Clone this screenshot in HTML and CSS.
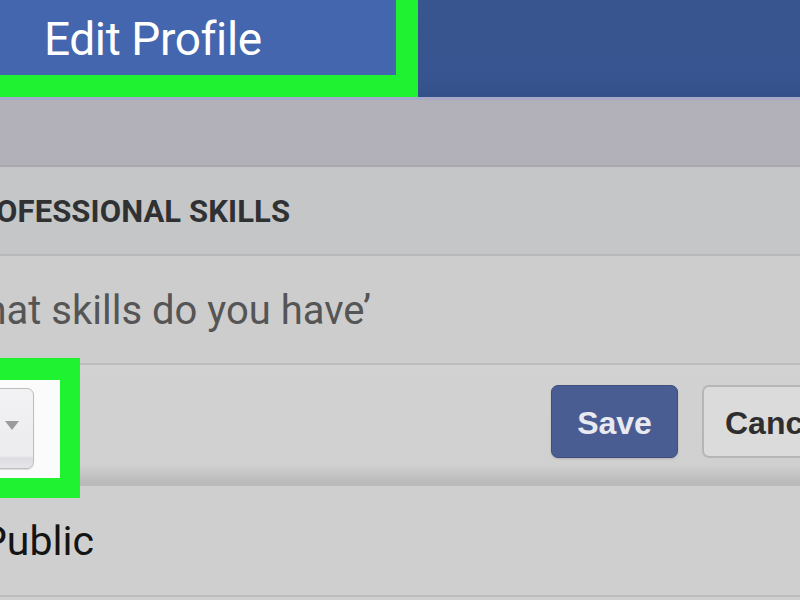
FILE: index.html
```html
<!DOCTYPE html>
<html>
<head>
<meta charset="utf-8">
<link rel="stylesheet" href="styles.css">
</head>
<body>
<div class="screen">
  <header class="topbar">
    <div class="tab"><span class="tab-title">Edit Profile</span></div>
    <div class="topbar-rest"></div>
  </header>
  <div class="spacer-band"></div>
  <div class="section-head"><span class="section-title">PROFESSIONAL SKILLS</span></div>
  <div class="input-row"><span class="input-text">What skills do you have’</span></div>
  <div class="action-row">
    <div class="highlight">
      <div class="privacy-btn"><span class="caret"></span></div>
    </div>
    <div class="actions">
      <button class="btn btn-save">Save</button>
      <button class="btn btn-cancel">Cancel</button>
    </div>
  </div>
  <div class="privacy-row"><span class="privacy-text">Public</span></div>
  <div class="bottom-rest"></div>
</div>
</body>
</html>
```
FILE: styles.css
```css
html, body {
  margin: 0;
  padding: 0;
  width: 800px;
  height: 600px;
  overflow: hidden;
  background: #cfcfcf;
}
.screen {
  width: 800px;
  height: 600px;
  overflow: hidden;
  display: flex;
  flex-direction: column;
  font-family: Roboto, "Liberation Sans", sans-serif;
}
.topbar {
  display: flex;
  height: 97px;
  flex: 0 0 97px;
  background: linear-gradient(to bottom, #39558f 0%, #385490 80%, #33508a 100%);
  border-bottom: 3px solid #a7aac4;
}
.tab {
  width: 396px;
  height: 75px;
  flex: 0 0 396px;
  background: #4366af;
  border-right: 22px solid #1ff231;
  border-bottom: 22px solid #1ff231;
  display: flex;
  align-items: center;
}
.tab-title {
  color: #ffffff;
  font-size: 46px;
  margin-left: 44px;
  margin-top: 2px;
  letter-spacing: -0.4px;
}
.topbar-rest {
  flex: 1;
}
.spacer-band {
  flex: 0 0 65px;
  background: #b2b1b9;
  border-bottom: 2px solid #a8a8ae;
}
.section-head {
  flex: 0 0 87px;
  background: #c4c6c8;
  border-bottom: 2px solid #b7b8ba;
  display: flex;
  align-items: center;
  overflow: hidden;
}
.section-title {
  font-weight: bold;
  font-size: 31px;
  color: #2f3133;
  margin-left: -44px;
  letter-spacing: 0.1px;
  white-space: nowrap;
  margin-top: 1px;
}
.input-row {
  flex: 0 0 107px;
  background: #cdcdcd;
  border-bottom: 2px solid #bdbdbd;
  display: flex;
  align-items: center;
  overflow: hidden;
}
.input-text {
  font-size: 40px;
  color: #555555;
  margin-left: -51px;
  white-space: nowrap;
  margin-top: 2px;
}
.action-row {
  position: relative;
  flex: 0 0 119px;
  background: linear-gradient(to bottom, #d2d2d2 0%, #d0d0d0 84%, #c4c4c4 92%, #b9b9b9 100%);
  border-bottom: 2px solid #bababa;
  display: flex;
  align-items: flex-start;
  justify-content: flex-end;
}
.actions {
  display: flex;
  gap: 24px;
  padding-top: 20px;
  margin-right: -110px;
}
.btn {
  font-family: "Liberation Sans", Arial, sans-serif;
  font-weight: bold;
  font-size: 32px;
  height: 73px;
  border-radius: 7px;
  padding: 0;
  padding-top: 4px;
  cursor: pointer;
}
.btn-save {
  width: 127px;
  background: #4a5d92;
  border: 1px solid #3e4f80;
  color: #e9e9f1;
  box-shadow: 0 1px 2px rgba(0,0,0,0.15);
}
.btn-cancel {
  width: 208px;
  background: #dbdbdb;
  border: 2px solid #b6b6b6;
  color: #2e2e2e;
  text-align: left;
  padding-left: 21px;
}
.highlight {
  position: absolute;
  left: 0;
  top: -7px;
  width: 60px;
  height: 98px;
  background: #fbfbfb;
  border-top: 22px solid #1ff231;
  border-right: 20px solid #1ff231;
  border-bottom: 20px solid #1ff231;
  overflow: hidden;
  z-index: 2;
}
.privacy-btn {
  position: absolute;
  left: -22px;
  top: 8px;
  width: 54px;
  height: 79px;
  border: 1px solid #bdbdc0;
  border-radius: 7px;
  background: linear-gradient(to bottom, #f2f2f4 0%, #ececef 85%, #dedee2 87%, #e6e6ea 100%);
  box-shadow: 0 1px 1px rgba(0,0,0,0.12);
}
.caret {
  position: absolute;
  left: 26px;
  top: 32px;
  width: 0;
  height: 0;
  border-left: 7px solid transparent;
  border-right: 7px solid transparent;
  border-top: 9px solid #9b9b9d;
}
.privacy-row {
  flex: 0 0 109px;
  background: #cfcfcf;
  border-bottom: 2px solid #bdbdbd;
  display: flex;
  align-items: center;
  overflow: hidden;
}
.privacy-text {
  font-size: 41px;
  color: #141414;
  margin-left: -19px;
  margin-top: 1px;
}
.bottom-rest {
  flex: 1;
  background: #cfcfcf;
}
```
